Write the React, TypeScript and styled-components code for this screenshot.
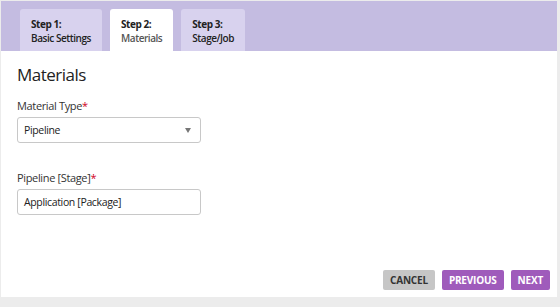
import styled, { createGlobalStyle } from "styled-components";

const GlobalStyle = createGlobalStyle`
  html, body {
    margin: 0;
    padding: 0;
    background: #ececec;
    font-family: "Open Sans", "Liberation Sans", sans-serif;
    color: #333;
  }
`;

const Page = styled.div`
  padding: 1px 3px 10px 1px;
  height: 307px;
  box-sizing: border-box;
`;

const Card = styled.div`
  background: #fff;
  height: 100%;
  display: flex;
  flex-direction: column;
`;

const TabBar = styled.div`
  background: #c4bce1;
  height: 50px;
  display: flex;
  align-items: flex-end;
  gap: 8px;
  padding-left: 19px;
  box-sizing: border-box;
`;

const Tab = styled.div<{ $active?: boolean }>`
  height: 42px;
  padding: 8px 11px 0;
  box-sizing: border-box;
  background: ${(p) => (p.$active ? "#fff" : "#d8d2ee")};
  border-radius: 3px 3px 0 0;
  font-size: 10px;
  line-height: 14px;
  letter-spacing: -0.45px;
  color: #222;
`;

const TabStep = styled.div`
  font-weight: 700;
`;

const TabName = styled.div<{ $active?: boolean }>`
  font-weight: 600;
  color: ${(p) => (p.$active ? "#555" : "#222")};
`;

const Body = styled.div`
  flex: 1;
  padding: 12px 16px 0;
`;

const Title = styled.h2`
  margin: 0 0 12px;
  font-size: 17px;
  line-height: 24px;
  font-weight: 400;
  letter-spacing: -0.5px;
  color: #222;
`;

const Field = styled.div`
  margin-bottom: 28px;
`;

const Label = styled.div`
  font-size: 11px;
  line-height: 14px;
  letter-spacing: -0.35px;
  color: #333;
  margin-bottom: 4px;
`;

const Required = styled.span`
  color: #d0021b;
`;

const Box = styled.div`
  width: 184px;
  height: 26px;
  box-sizing: border-box;
  border: 1px solid #c8c8c8;
  border-radius: 3px;
  display: flex;
  align-items: center;
  justify-content: space-between;
  padding: 0 9px 0 6px;
  font-size: 10.5px;
  letter-spacing: -0.35px;
  color: #222;
`;

const Caret = styled.span`
  width: 0;
  height: 0;
  border-left: 3px solid transparent;
  border-right: 3px solid transparent;
  border-top: 5px solid #777;
`;

const Footer = styled.div`
  display: flex;
  justify-content: flex-end;
  gap: 7px;
  padding: 0 7px 7px 0;
`;

const Button = styled.button<{ $secondary?: boolean }>`
  height: 20px;
  padding: 0 7px;
  border: none;
  border-radius: 2px;
  background: ${(p) => (p.$secondary ? "#c6c6c6" : "#9f5bbb")};
  color: ${(p) => (p.$secondary ? "#333" : "#fff")};
  font-family: "Open Sans", "Liberation Sans", sans-serif;
  font-size: 10px;
  font-weight: 700;
  letter-spacing: -0.2px;
  text-transform: uppercase;
  cursor: pointer;
`;

const tabs = [
  { step: "Step 1:", name: "Basic Settings" },
  { step: "Step 2:", name: "Materials", active: true },
  { step: "Step 3:", name: "Stage/Job" },
];

export default function App() {
  return (
    <>
      <GlobalStyle />
      <Page>
        <Card>
          <TabBar>
            {tabs.map((t) => (
              <Tab key={t.step} $active={t.active}>
                <TabStep>{t.step}</TabStep>
                <TabName $active={t.active}>{t.name}</TabName>
              </Tab>
            ))}
          </TabBar>
          <Body>
            <Title>Materials</Title>
            <Field>
              <Label>
                Material Type<Required>*</Required>
              </Label>
              <Box>
                Pipeline
                <Caret />
              </Box>
            </Field>
            <Field>
              <Label>
                Pipeline [Stage]<Required>*</Required>
              </Label>
              <Box>Application [Package]</Box>
            </Field>
          </Body>
          <Footer>
            <Button $secondary>Cancel</Button>
            <Button>Previous</Button>
            <Button>Next</Button>
          </Footer>
        </Card>
      </Page>
    </>
  );
}
